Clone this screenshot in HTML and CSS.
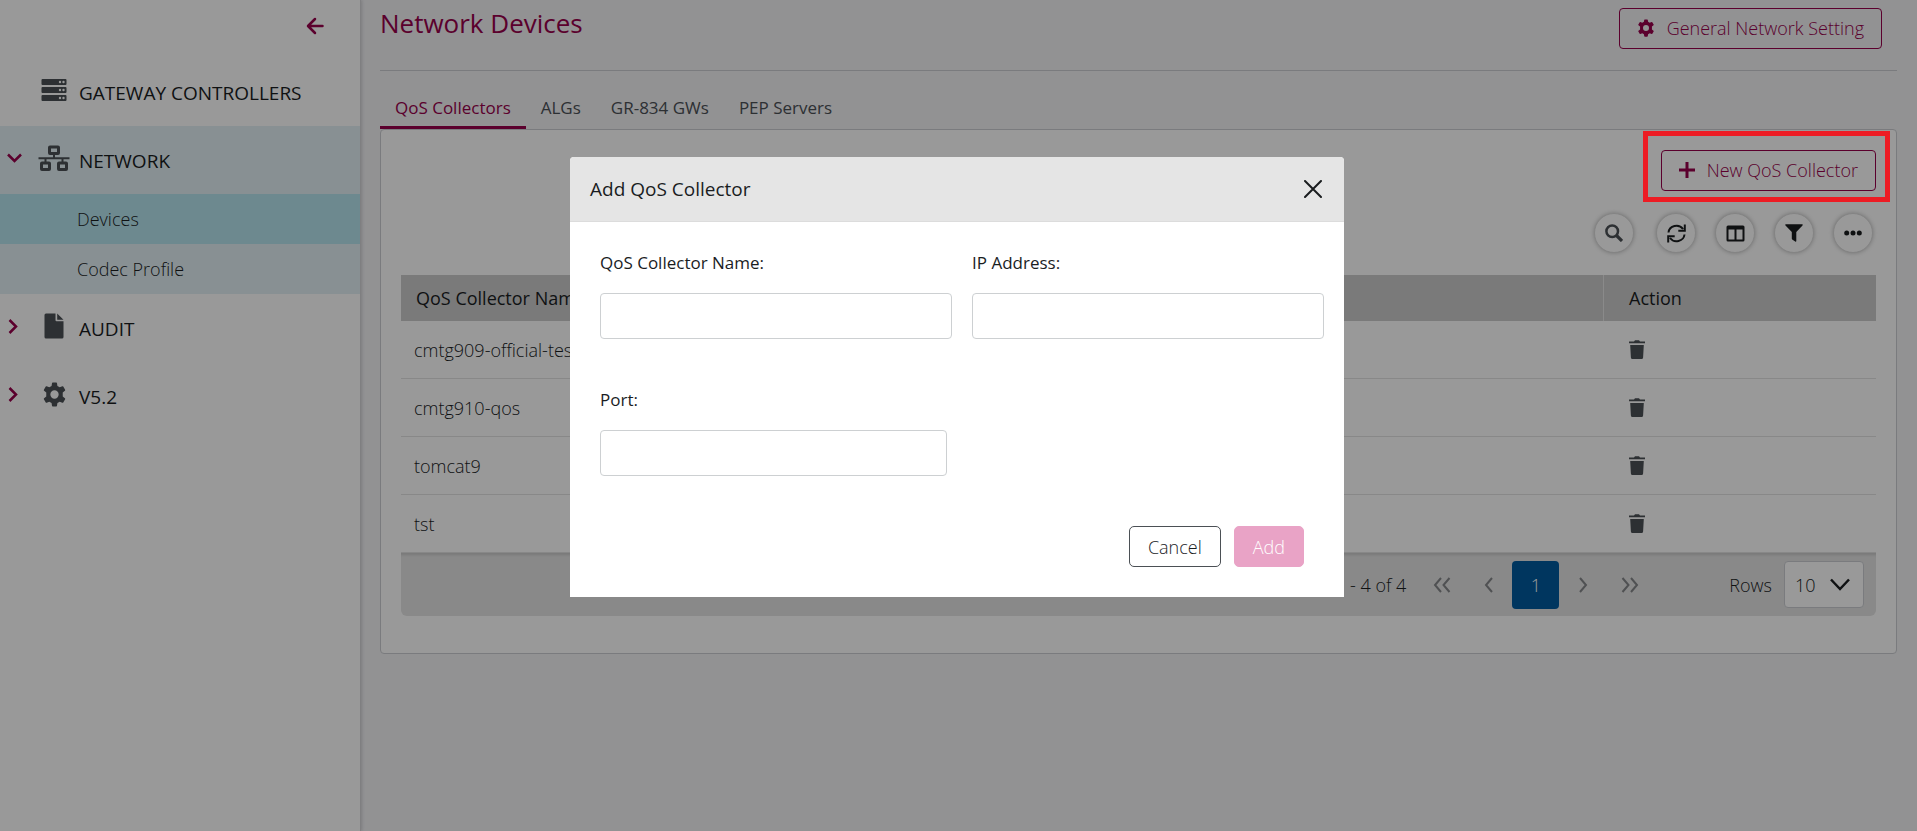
FILE: index.html
```html
<!DOCTYPE html>
<html lang="en">
<head>
<meta charset="utf-8">
<meta name="viewport" content="width=device-width, initial-scale=1">
<title>Network Devices</title>
<link rel="stylesheet" href="styles.css">
</head>
<body>
<svg class="sprite" aria-hidden="true">
  <symbol id="gear" viewBox="0 0 24 24"><path fill-rule="evenodd" d="M9.6 1.2Q9.7.6 10.3.5h3.4q.6.1.7.7l.4 2.6 2.2 1.3 2.5-1q.6-.2.9.3l1.8 3q.3.6-.2 1L19.900 10v4l2.100 1.600q.5.4.2 1l-1.800 3q-.3.5-.9.3l-2.500-1-2.200 1.300-.4 2.600q-.1.6-.7.7h-3.400q-.6-.1-.7-.7l-.4-2.600L7 18.900l-2.500 1q-.6.2-.9-.3l-1.800-3q-.3-.6.2-1L4.100 14v-4L2 8.400q-.5-.4-.2-1l1.800-3q.3-.5.9-.3l2.500 1 2.200-1.300zM12 8a4 4 0 1 0 0 8 4 4 0 0 0 0-8z"/></symbol>
  <symbol id="trash" viewBox="0 0 16 19"><path d="M0 1.500h5L6 .2h4l1 1.300h5v1.800H0zM1.200 5h13.600l-.7 12.400Q14 18.900 12.600 18.900H3.400Q2 18.900 1.900 17.400z"/></symbol>
</svg>

<div class="app">
  <aside class="sidebar">
    <div class="sidebar-top">
      <button class="plain accent" type="button" aria-label="Collapse menu">
        <svg width="18" height="18" viewBox="0 0 18 18" fill="none" stroke="currentColor" stroke-width="2.500" stroke-linecap="round" stroke-linejoin="round"><path d="M16.500 9H2.500M9 2L2 9l7 7"/></svg>
      </button>
    </div>
    <nav>
      <a class="nav-item" href="#">
        <span class="caret"></span>
        <span class="nav-icon"><svg width="26" height="24" viewBox="0 0 26 24"><path fill="currentColor" d="M1.500 1h23q1 0 1 1v4q0 1-1 1h-23q-1 0-1-1V2q0-1 1-1zM1.500 9h23q1 0 1 1v4q0 1-1 1h-23q-1 0-1-1v-4q0-1 1-1zM1.500 17h23q1 0 1 1v4q0 1-1 1h-23q-1 0-1-1v-4q0-1 1-1z"/><g class="lamp"><circle cx="19" cy="4" r="1.200"/><circle cx="22.500" cy="4" r="1.200"/><circle cx="19" cy="12" r="1.200"/><circle cx="22.500" cy="12" r="1.200"/><circle cx="19" cy="20" r="1.200"/><circle cx="22.500" cy="20" r="1.200"/></g></svg></span>
        <span class="nav-text">GATEWAY CONTROLLERS</span>
      </a>
      <a class="nav-item open" href="#">
        <span class="caret"><svg width="15" height="11" viewBox="0 0 15 11" fill="none" stroke="currentColor" stroke-width="2.500"><path d="M1 1.500l6.500 6.500L14 1.500"/></svg></span>
        <span class="nav-icon"><svg width="32" height="26" viewBox="0 0 32 26" fill="none" stroke="currentColor"><g stroke-width="3"><rect x="11.500" y="2" width="9" height="6.500" rx=".5"/><rect x="3.500" y="18" width="8" height="6.500" rx=".5"/><rect x="20.500" y="18" width="8" height="6.500" rx=".5"/></g><path stroke-width="2" d="M.5 13.200h31M16 9v4M7.500 13v4M24.500 13v4"/></svg></span>
        <span class="nav-text">NETWORK</span>
      </a>
      <a class="sub-item current" href="#">Devices</a>
      <a class="sub-item" href="#">Codec Profile</a>
      <a class="nav-item" href="#">
        <span class="caret"><svg width="11" height="15" viewBox="0 0 11 15" fill="none" stroke="currentColor" stroke-width="2.500"><path d="M2.500 1L9 7.500 2.500 14"/></svg></span>
        <span class="nav-icon"><svg width="20" height="26" viewBox="0 0 20 26" fill="currentColor"><path d="M2 .5h9.500v6.800q0 1 1 1h7V24q0 1.500-1.500 1.500H2Q.5 25.500.5 24V2Q.5.5 2 .5zM13.200.5l6.300 6.200h-6.300z"/></svg></span>
        <span class="nav-text">AUDIT</span>
      </a>
      <a class="nav-item" href="#">
        <span class="caret"><svg width="11" height="15" viewBox="0 0 11 15" fill="none" stroke="currentColor" stroke-width="2.500"><path d="M2.500 1L9 7.500 2.500 14"/></svg></span>
        <span class="nav-icon"><svg width="25" height="25" fill="currentColor"><use href="#gear"/></svg></span>
        <span class="nav-text">V5.2</span>
      </a>
    </nav>
  </aside>

  <main class="main">
    <header class="page-head">
      <h1>Network Devices</h1>
      <button class="btn outline" type="button"><svg width="18" height="18" fill="currentColor"><use href="#gear"/></svg>General Network Setting</button>
    </header>
    <nav class="tabs">
      <a class="tab selected" href="#">QoS Collectors</a>
      <a class="tab" href="#">ALGs</a>
      <a class="tab" href="#">GR-834 GWs</a>
      <a class="tab" href="#">PEP Servers</a>
    </nav>
    <section class="card">
      <div class="actions">
        <div class="marked">
          <button class="btn outline" type="button"><svg width="16" height="16" viewBox="0 0 16 16" fill="none" stroke="currentColor" stroke-width="3"><path d="M8 0v16M0 8h16"/></svg>New QoS Collector</button>
        </div>
      </div>
      <div class="tools">
        <button class="round search" type="button" aria-label="Search"><svg width="18" height="18" viewBox="0 0 18 18" fill="none" stroke="currentColor" stroke-width="2.500"><circle cx="7.200" cy="7.200" r="5.800"/><path stroke-width="3.200" d="M11.500 11.500l5.500 5.500"/></svg></button>
        <button class="round" type="button" aria-label="Refresh"><svg width="19" height="19" viewBox="0 0 19 19" fill="none" stroke="currentColor" stroke-width="2"><path d="M1.500 8.500A8 7.500 0 0 1 16 5M17.800.5v6.300h-6.500M17.500 10.500A8 7.500 0 0 1 3 14M1.200 18.500v-6.300h6.500"/></svg></button>
        <button class="round" type="button" aria-label="Columns"><svg width="19" height="17" viewBox="0 0 19 17"><path fill="currentColor" fill-rule="evenodd" d="M2 .5h15q1.500 0 1.500 1.500v13q0 1.500-1.500 1.500H2Q.5 16.500.5 15V2Q.5.5 2 .5zM2.500 4.500v10h6v-10zM10.500 4.500v10h6v-10z"/></svg></button>
        <button class="round" type="button" aria-label="Filter"><svg width="18" height="18" viewBox="0 0 18 18"><path fill="currentColor" d="M.8.200h16.400q1 .3.300 1.200L11.300 8v9.300q-.3.800-1.100.3l-3-2.200q-.4-.4-.4-1V8L.5 1.400Q-.2.500.8.200z"/></svg></button>
        <button class="round" type="button" aria-label="More"><svg width="18" height="6" viewBox="0 0 18 6" fill="currentColor"><circle cx="2.700" cy="3" r="2.500"/><circle cx="9" cy="3" r="2.500"/><circle cx="15.300" cy="3" r="2.500"/></svg></button>
      </div>
      <table class="grid">
        <thead><tr><th>QoS Collector Name</th><th class="action">Action</th></tr></thead>
        <tbody>
          <tr><td>cmtg909-official-test</td><td class="action"><button class="plain" type="button" aria-label="Delete"><svg width="16" height="19"><use href="#trash"/></svg></button></td></tr>
          <tr><td>cmtg910-qos</td><td class="action"><button class="plain" type="button" aria-label="Delete"><svg width="16" height="19"><use href="#trash"/></svg></button></td></tr>
          <tr><td>tomcat9</td><td class="action"><button class="plain" type="button" aria-label="Delete"><svg width="16" height="19"><use href="#trash"/></svg></button></td></tr>
          <tr><td>tst</td><td class="action"><button class="plain" type="button" aria-label="Delete"><svg width="16" height="19"><use href="#trash"/></svg></button></td></tr>
        </tbody>
      </table>
      <div class="pager">
        <span class="range">1 - 4 of 4</span>
        <div class="pages">
          <button class="page-btn" type="button" aria-label="First page"><svg width="18" height="16" viewBox="0 0 18 16"><path d="M8 1L2 8l6 7M16.500 1l-6 7 6 7"/></svg></button>
          <button class="page-btn" type="button" aria-label="Previous page"><svg width="10" height="16" viewBox="0 0 10 16"><path d="M8 1L2 8l6 7"/></svg></button>
          <button class="page-btn active" type="button">1</button>
          <button class="page-btn" type="button" aria-label="Next page"><svg width="10" height="16" viewBox="0 0 10 16"><path d="M2 1l6 7-6 7"/></svg></button>
          <button class="page-btn" type="button" aria-label="Last page"><svg width="18" height="16" viewBox="0 0 18 16"><path d="M1.500 1l6 7-6 7M10 1l6 7-6 7"/></svg></button>
        </div>
        <label class="rows-label" for="rows">Rows</label>
        <div class="select-wrap">
          <select id="rows"><option>10</option></select>
          <svg class="select-arrow" width="20" height="13" viewBox="0 0 20 13" fill="none" stroke="currentColor" stroke-width="2.500"><path d="M1 1.500l9 9.500 9-9.500"/></svg>
        </div>
      </div>
    </section>
  </main>
</div>

<div class="overlay">
  <form class="modal" role="dialog" aria-labelledby="dialog-title">
    <header class="modal-head">
      <h2 id="dialog-title">Add QoS Collector</h2>
      <button class="plain" type="button" aria-label="Close"><svg width="18" height="18" viewBox="0 0 18 18" fill="none" stroke="currentColor" stroke-width="2" stroke-linecap="round"><path d="M1 1l16 16M17 1L1 17"/></svg></button>
    </header>
    <div class="modal-body">
      <div class="field"><label for="name">QoS Collector Name:</label><input id="name" type="text"></div>
      <div class="field"><label for="ip">IP Address:</label><input id="ip" type="text"></div>
      <div class="field short"><label for="port">Port:</label><input id="port" type="text"></div>
    </div>
    <footer class="modal-foot">
      <button class="btn cancel" type="button">Cancel</button>
      <button class="btn add" type="submit" disabled>Add</button>
    </footer>
  </form>
</div>
</body>
</html>
```
FILE: styles.css
```css
:root {
  --accent: #98004b;
  --ink: #1a1d1f;
  --icon: #4b5055;
  --line: #ccced2;
}

* { box-sizing: border-box; }

body {
  margin: 0;
  background: #f3f3f6;
  color: var(--ink);
  font: 300 18px/24px "Open Sans", "Noto Sans", sans-serif;
}

a { color: inherit; text-decoration: none; }
button, input, select { font: inherit; color: inherit; }
button { cursor: pointer; }
svg { display: block; flex: none; }
.sprite { position: absolute; width: 0; height: 0; }

.plain { display: block; padding: 0; border: 0; background: none; }
.accent { color: var(--accent); }

.app { display: flex; min-height: 100vh; }

.sidebar {
  flex: none;
  width: 361px;
  border-right: 1px solid #d4d4d8;
  background: #fff;
  box-shadow: 1px 0 3px rgba(0, 0, 0, .15);
}
.sidebar-top {
  display: flex;
  justify-content: flex-end;
  height: 58px;
  padding: 17px 36px 0 0;
}
.sidebar-top .plain { height: 18px; }
.nav-item {
  display: flex;
  align-items: center;
  height: 68px;
  font-size: 19px;
  font-weight: 500;
}
.nav-item.open, .sub-item { background: #e3f1f5; }
.caret { width: 38px; padding-left: 7px; color: var(--accent); }
.nav-icon { display: flex; justify-content: center; width: 32px; color: var(--icon); }
.caret, .nav-icon { margin-bottom: 4px; }
.nav-text { padding: 2px 0 0 9px; }
.lamp { fill: #fff; }
.sub-item { display: block; padding: 13px 0 13px 77px; }
.sub-item.current { background: #b6e4ee; }

.main { flex: 1; min-width: 0; padding: 0 20px 40px 19px; }
.page-head {
  display: flex;
  justify-content: space-between;
  align-items: flex-start;
  height: 71px;
  padding: 8px 15px 0 0;
  border-bottom: 1px solid var(--line);
}
h1 { margin: 0; color: var(--accent); font-size: 26px; font-weight: 500; line-height: 30px; }

.btn {
  display: flex;
  align-items: center;
  gap: 12px;
  height: 41px;
  padding: 0 17px 2px;
  border: 1px solid var(--accent);
  border-radius: 4px;
  background: none;
}
.btn.outline { color: var(--accent); }

.tabs { display: flex; height: 58px; font-size: 17px; font-weight: 500; color: var(--icon); }
.tab { padding: 25px 15px 0; border-bottom: 3px solid transparent; }
.tab.selected { color: var(--accent); border-color: var(--accent); }

.card {
  padding: 20px 20px 37px;
  border: 1px solid var(--line);
  border-radius: 4px;
  background: #fff;
}
.actions { display: flex; justify-content: flex-end; }
.marked { position: relative; }
.marked::after {
  content: "";
  position: absolute;
  z-index: 3;
  inset: -19px -14px -11px -18px;
  border: 5px solid #ed1c24;
}
.tools { display: flex; justify-content: flex-end; gap: 19px; padding: 22px 3px; }
.round {
  display: grid;
  place-items: center;
  width: 40px;
  height: 40px;
  padding: 0;
  border: 1px solid #dcdcdc;
  border-radius: 50%;
  background: #fff;
  box-shadow: 0 0 4px rgba(0, 0, 0, .25);
}
.search { margin-right: 3px; color: var(--icon); }

.grid { width: 100%; border-collapse: separate; border-spacing: 0; table-layout: fixed; }
th { height: 46px; padding: 0 15px; background: #cbcbcb; font-weight: 500; text-align: left; }
td { height: 58px; padding: 0 13px; border-bottom: 1px solid #e3e3e3; }
.action { width: 273px; padding-left: 25px; }
th.action { border-left: 1px solid #e6e6e6; }
td.action { padding-left: 26px; }
td .plain { color: var(--icon); fill: currentColor; }

.pager {
  display: flex;
  align-items: center;
  height: 63px;
  padding: 0 12px;
  border-radius: 0 0 6px 6px;
  background: #e5e5e5;
  box-shadow: inset 0 4px 3px -2px rgba(0, 0, 0, .12);
}
.range { margin-left: auto; }
.pages { display: flex; padding: 0 76px 0 12px; }
.page-btn {
  display: grid;
  place-items: center;
  width: 47px;
  height: 48px;
  padding: 0;
  border: 0;
  border-radius: 4px;
  background: none;
}
.page-btn svg { fill: none; stroke: #85878a; stroke-width: 2; }
.page-btn.active { background: #005a9f; color: #fff; }
.select-wrap { position: relative; margin-left: 12px; }
select {
  width: 80px;
  height: 47px;
  padding: 0 10px;
  border: 1px solid var(--line);
  border-radius: 4px;
  background: #fff;
  appearance: none;
}
.select-arrow { position: absolute; top: 17px; right: 14px; pointer-events: none; }

.overlay {
  position: fixed;
  z-index: 2;
  inset: 0;
  padding: 157px 23px 20px 20px;
  background: rgba(0, 0, 0, .4);
}
.modal {
  max-width: 774px;
  margin: 0 auto;
  border-radius: 4px 4px 0 0;
  background: #fff;
}
.modal-head {
  display: flex;
  align-items: center;
  justify-content: space-between;
  height: 65px;
  padding: 0 22px 0 20px;
  border-bottom: 1px solid #dcdcdc;
  border-radius: 4px 4px 0 0;
  background: #e5e5e5;
}
h2 { margin: 0; font-size: 19px; font-weight: 500; }
.modal-body {
  display: grid;
  grid-template-columns: 1fr 1fr;
  gap: 49px 20px;
  padding: 29px 20px 0 30px;
}
.field { display: flex; flex-direction: column; gap: 18px; }
.field.short { padding-right: 5px; }
label { font-size: 17px; font-weight: 500; }
.pager label { font-size: 18px; font-weight: 300; }
input {
  width: 100%;
  height: 46px;
  padding: 0 12px;
  border: 1px solid #cdd0d2;
  border-radius: 4px;
  background: #fff;
}
.modal-foot { display: flex; justify-content: flex-end; gap: 13px; padding: 50px 40px 30px; }
.modal-foot .btn { padding: 0 18px; border-radius: 5px; }
.modal-foot .cancel { border-color: var(--icon); }
.modal-foot .add { border-color: #e9a3c6; background: #e9a3c6; color: #fff; }
```
